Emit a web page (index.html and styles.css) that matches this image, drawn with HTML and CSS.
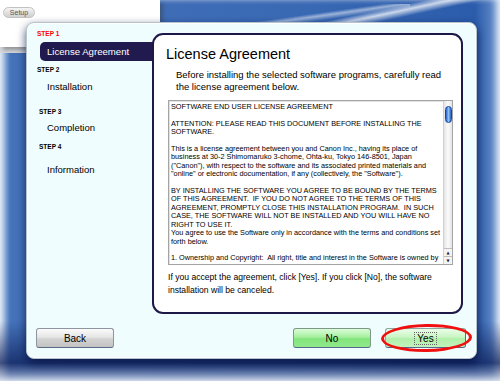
FILE: index.html
```html
<!DOCTYPE html>
<html lang="en">
<head>
    <meta charset="UTF-8">
    <meta name="viewport" content="width=device-width, initial-scale=1.0">
    <title>License Agreement</title>
    <link rel="stylesheet" href="styles.css">
</head>
<body>
    <div class="desktop">
        <div class="mac-window">
            <span class="setup-btn">Setup</span>
        </div>

        <div class="dialog">
            <div class="dialog-main">
                <div class="steps">
                    <div class="step step-1">
                        <p class="step-label current">STEP 1</p>
                        <p class="step-item active">License Agreement</p>
                    </div>
                    <div class="step step-2">
                        <p class="step-label">STEP 2</p>
                        <p class="step-item">Installation</p>
                    </div>
                    <div class="step step-3">
                        <p class="step-label">STEP 3</p>
                        <p class="step-item">Completion</p>
                    </div>
                    <div class="step step-4">
                        <p class="step-label">STEP 4</p>
                        <p class="step-item">Information</p>
                    </div>
                </div>

                <div class="panel">
                    <h1>License Agreement</h1>
                    <p class="intro">Before installing the selected software programs, carefully read<br>the license agreement below.</p>
                    <div class="license-box">
                        <div class="license-text">SOFTWARE END USER LICENSE AGREEMENT

ATTENTION: PLEASE READ THIS DOCUMENT BEFORE INSTALLING THE
SOFTWARE.

This is a license agreement between you and Canon Inc., having its place of
business at 30-2 Shimomaruko 3-chome, Ohta-ku, Tokyo 146-8501, Japan
("Canon"), with respect to the software and its associated printed materials and
"online" or electronic documentation, if any (collectively, the "Software").

BY INSTALLING THE SOFTWARE YOU AGREE TO BE BOUND BY THE TERMS
OF THIS AGREEMENT.  IF YOU DO NOT AGREE TO THE TERMS OF THIS
AGREEMENT, PROMPTLY CLOSE THIS INSTALLATION PROGRAM.  IN SUCH
CASE, THE SOFTWARE WILL NOT BE INSTALLED AND YOU WILL HAVE NO
RIGHT TO USE IT.
You agree to use the Software only in accordance with the terms and conditions set
forth below.

1. Ownership and Copyright:  All right, title and interest in the Software is owned by</div>
                        <div class="scrollbar">
                            <div class="thumb"></div>
                            <div class="arrows">
                                <span class="arrow">&#9650;</span>
                                <span class="arrow">&#9660;</span>
                            </div>
                        </div>
                    </div>
                    <p class="note">If you accept the agreement, click [Yes]. If you click [No], the software<br>installation will be canceled.</p>
                </div>
            </div>

            <div class="buttons">
                <button class="btn btn-back">Back</button>
                <div class="btn-group">
                    <button class="btn btn-no">No</button>
                    <button class="btn btn-yes"><span class="focus">Yes</span><span class="circle"></span></button>
                </div>
            </div>
        </div>
    </div>
</body>
</html>
```

FILE: styles.css
```css
*{
    box-sizing: border-box;
}
html, body{
    margin: 0;
    padding: 0;
}
body{
    width: 500px;
    height: 381px;
    overflow: hidden;
    background-color: #eef2f7;
    font-family: "Liberation Sans", Arial, sans-serif;
    color: #000;
}
p, h1{
    margin: 0;
}

/* desktop behind the installer */
.desktop{
    position: relative;
    width: 500px;
    height: 381px;
    background:
        linear-gradient(168deg, transparent 42%, rgba(255,255,255,.75) 50%, transparent 60%) 290px 0 / 200px 26px no-repeat,
        linear-gradient(172deg, transparent 45%, rgba(255,255,255,.5) 52%, transparent 62%) 230px 4px / 180px 22px no-repeat,
        linear-gradient(to right, #7fa4d8 0px, #4472ba 10px, #3a69b4 60%, #2b5cab 95%, #6c93cf 100%),
        #2f62b4;
    box-shadow:
        inset 7px 0 7px -3px rgba(240,244,250,.9),
        inset -7px 0 7px -3px rgba(240,244,250,.9),
        inset 0 -7px 7px -3px rgba(240,244,250,.9);
}
.desktop::after{
    content: "";
    position: absolute;
    left: 0;
    right: 0;
    bottom: 0;
    height: 60px;
    background: linear-gradient(to bottom, transparent, rgba(14,32,90,.75) 70%, rgba(200,210,230,.6));
    pointer-events: none;
}
.mac-window{
    position: absolute;
    left: 0;
    top: 0;
    width: 160px;
    height: 47px;
    background-color: #fff;
    box-shadow: 3px 3px 4px rgba(60,60,60,.45), 0 6px 0 #d6d9de;
    padding: 1px 0 0 3px;
}
.setup-btn{
    display: inline-block;
    width: 32px;
    height: 11px;
    border-radius: 6px;
    background: linear-gradient(#f4f4f4, #d0d0d0);
    border: 1px solid #c2c2c2;
    font-size: 7px;
    line-height: 9px;
    text-align: center;
    color: #555;
}

/* installer window */
.dialog{
    position: absolute;
    left: 26px;
    top: 22px;
    width: 451px;
    height: 337px;
    z-index: 1;
    background-color: #effdfe;
    border: 1px solid #b4c4cc;
    border-radius: 8px;
    box-shadow: inset 0 0 0 1px #fff, 0 4px 10px rgba(5,15,60,.75);
    padding: 7px 13px 0 0;
}
.dialog-main{
    display: flex;
}
.steps{
    width: 125px;
    flex-shrink: 0;
}
.step-label{
    margin-left: 10px;
    font-size: 6.5px;
    font-weight: bold;
    line-height: 8px;
}
.step-label.current{
    color: #f00;
}
.step-item{
    margin-left: 20px;
    font-size: 9.5px;
    line-height: 12px;
}
.step-item.active{
    margin-left: 13px;
    margin-top: 4px;
    height: 19px;
    line-height: 19px;
    padding-left: 7px;
    margin-right: -2px;
    border-radius: 5px 0 0 5px;
    background-color: #201a4e;
    color: #fff;
    font-size: 9.6px;
}
.step-2{
    margin-top: 5px;
}
.step-2 .step-item{
    margin-top: 7px;
}
.step-3{
    margin-top: 15px;
}
.step-3 .step-label{
    margin-left: 12px;
}
.step-3 .step-item{
    margin-top: 6px;
}
.step-4{
    margin-top: 9px;
}
.step-4 .step-label{
    margin-left: 12px;
}
.step-4 .step-item{
    margin-top: 13px;
}

/* right hand panel */
.panel{
    width: 311px;
    height: 281px;
    margin-top: 3px;
    background-color: #fff;
    border: 2px solid #1e1848;
    border-radius: 11px;
    padding: 11px 8px 0 12px;
}
h1{
    font-size: 14.5px;
    font-weight: normal;
    line-height: 17px;
}
.intro{
    margin: 6px 0 0 10px;
    font-size: 9.5px;
    line-height: 11.5px;
}
.license-box{
    display: flex;
    margin: 8px 0 0 2px;
    height: 165px;
    border: 1px solid #a4a4a4;
    box-shadow: inset 1px 1px 0 #e2e2e2;
}
.license-text{
    flex: 1;
    padding: 2px 0 0 2px;
    font-size: 7.3px;
    line-height: 8.4px;
    white-space: pre;
    overflow: hidden;
}
.scrollbar{
    width: 9px;
    display: flex;
    flex-direction: column;
    justify-content: space-between;
    align-items: center;
    background: linear-gradient(to right, #e4e4e4, #fbfbfb 50%, #e4e4e4);
    border-left: 1px solid #d0d0d0;
}
.thumb{
    margin-top: 5px;
    width: 7px;
    height: 17px;
    border-radius: 4px;
    border: 1px solid #1845a0;
    background: linear-gradient(to right, #2a5fc8, #8fc0f5 50%, #2a5fc8);
}
.arrows{
    display: flex;
    flex-direction: column;
    width: 100%;
}
.arrow{
    height: 8px;
    border-top: 1px solid #bdbdbd;
    font-family: "DejaVu Sans", sans-serif;
    font-size: 4px;
    line-height: 7px;
    text-align: center;
    color: #222;
    background-color: #f4f4f4;
}
.note{
    margin: 6px 0 0 2px;
    font-size: 8.6px;
    line-height: 13px;
    white-space: nowrap;
}

/* bottom buttons */
.buttons{
    display: flex;
    justify-content: space-between;
    margin: 14px -3px 0 0;
    padding-left: 9px;
}
.btn-group{
    display: flex;
    gap: 14px;
}
.btn{
    position: relative;
    width: 78px;
    height: 20px;
    padding: 0;
    border: 1px solid #8f959e;
    border-bottom-color: #5d6a86;
    border-radius: 3px;
    font-family: "Liberation Sans", Arial, sans-serif;
    font-size: 10px;
    color: #000;
}
.btn-back{
    background: linear-gradient(#fbfbfb, #e6e6e6 45%, #d2d2d2 55%, #c3c3c3);
}
.btn-no{
    background: linear-gradient(#dcfcd8, #a6ef9f 45%, #83e47c 55%, #8fea89);
    border-color: #7c9a86;
    border-bottom-color: #55688c;
}
.btn-yes{
    width: 81px;
    background: linear-gradient(#eafde8, #c9f6c4 45%, #b0efaa 55%, #c2f4bd);
    border-color: #8aa7a0;
    border-right-color: #4f6aa0;
    border-bottom-color: #55688c;
}
.focus{
    padding: 0 2px;
    border: 1px dotted #666;
}
.circle{
    position: absolute;
    left: -5px;
    top: -5px;
    width: 91px;
    height: 28px;
    border: 3px solid #f01010;
    border-radius: 50%;
    transform: rotate(-1deg);
}
```
